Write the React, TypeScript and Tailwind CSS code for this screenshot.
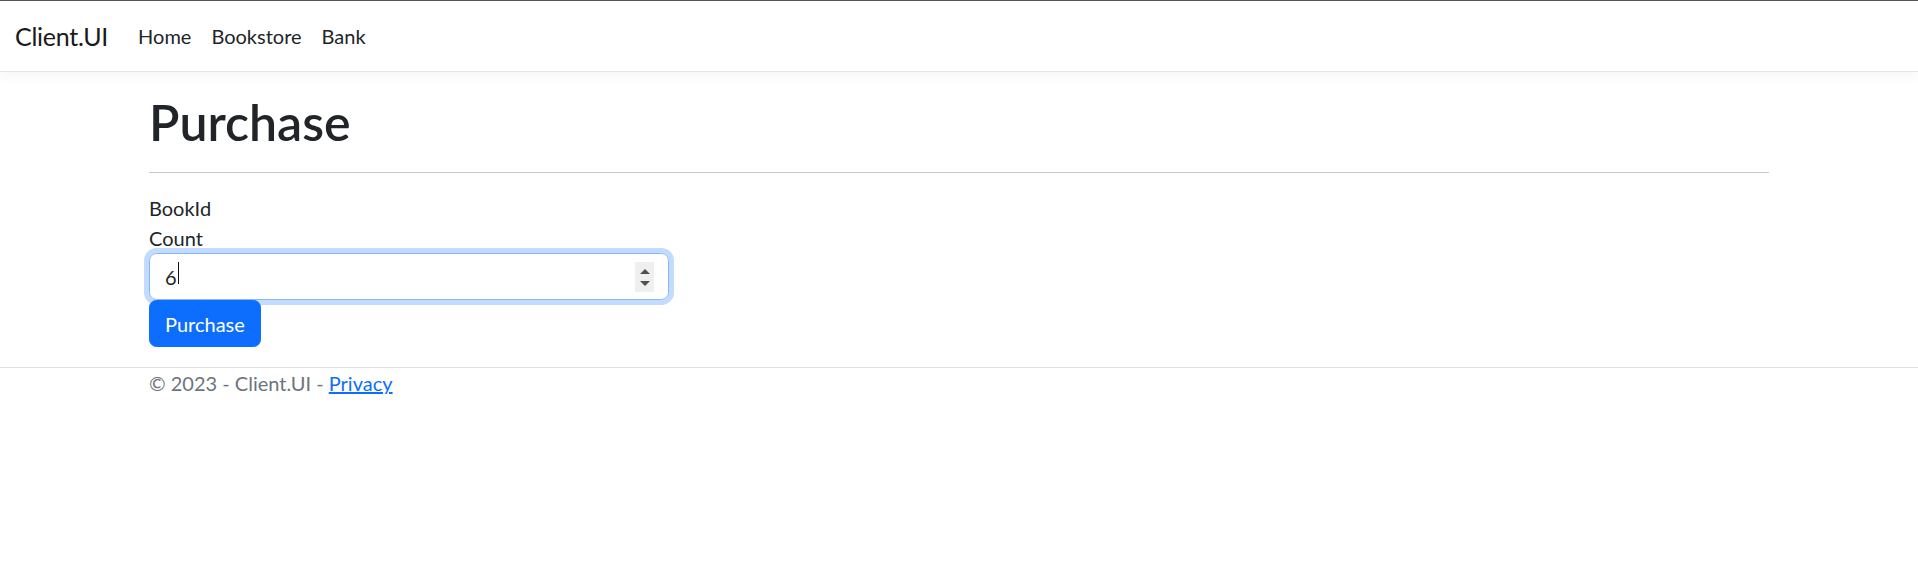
export default function App() {
  return (
    <div className="min-h-[572px] bg-white border-t border-[#555] font-['Lato','Open_Sans',sans-serif] text-[20px] leading-[30px] text-[#212529]">
      <header>
        <nav className="flex items-center h-[71px] px-[15px] border-b border-[#e5e5e5] shadow-[0_4px_12px_rgba(0,0,0,0.04)]">
          <a href="#" className="text-[25px] leading-[37px] mr-[20px] tracking-[-0.25px] text-[#1a1a1a]">
            Client.UI
          </a>
          <ul className="flex">
            {["Home", "Bookstore", "Bank"].map((item) => (
              <li key={item}>
                <a href="#" className="block px-[10px] py-[10px] text-[#212529]">
                  {item}
                </a>
              </li>
            ))}
          </ul>
        </nav>
      </header>

      <main className="mx-auto w-[1650px] px-[15px] pt-[20px] pb-[20px]">
        <h1 className="text-[50px] leading-[60px] font-semibold">Purchase</h1>
        <hr className="mt-[20px] mb-[20px] border-t border-[#c8c9ca]" />

        <form className="w-[520px]" onSubmit={(e) => e.preventDefault()}>
          <label className="block">BookId</label>
          <label className="block">Count</label>
          <div className="relative">
            <input
              type="text"
              defaultValue="6"
              className="block w-full px-[15px] py-[7.5px] leading-[30px] border border-[#86b7fe] rounded-[7.5px] outline-none shadow-[0_0_0_5px_rgba(13,110,253,0.25)] text-[#212529]"
            />
            {/* caret after the value */}
            <span className="absolute left-[29px] top-[9px] w-px h-[22px] bg-[#111]" />
            {/* number spinner */}
            <span className="absolute right-[15px] top-[9px] w-[19px] h-[30px] bg-[#efefef] flex flex-col items-center justify-center gap-[7px]">
              <svg width="10" height="5" viewBox="0 0 10 5">
                <path d="M0 5L5 0L10 5Z" fill="#505050" />
              </svg>
              <svg width="10" height="5" viewBox="0 0 10 5">
                <path d="M0 0L10 0L5 5Z" fill="#505050" />
              </svg>
            </span>
          </div>
          <button
            type="submit"
            className="px-[15px] py-[7.5px] leading-[30px] bg-[#0d6efd] text-white rounded-[7.5px] border border-[#0d6efd]"
          >
            Purchase
          </button>
        </form>
      </main>

      <footer className="border-t border-[#dee2e6] text-[#6c757d]">
        <div className="mx-auto w-[1650px] px-[15px]">
          © 2023 - Client.UI -{" "}
          <a href="#" className="text-[#0d6efd] underline">
            Privacy
          </a>
        </div>
      </footer>
    </div>
  );
}
